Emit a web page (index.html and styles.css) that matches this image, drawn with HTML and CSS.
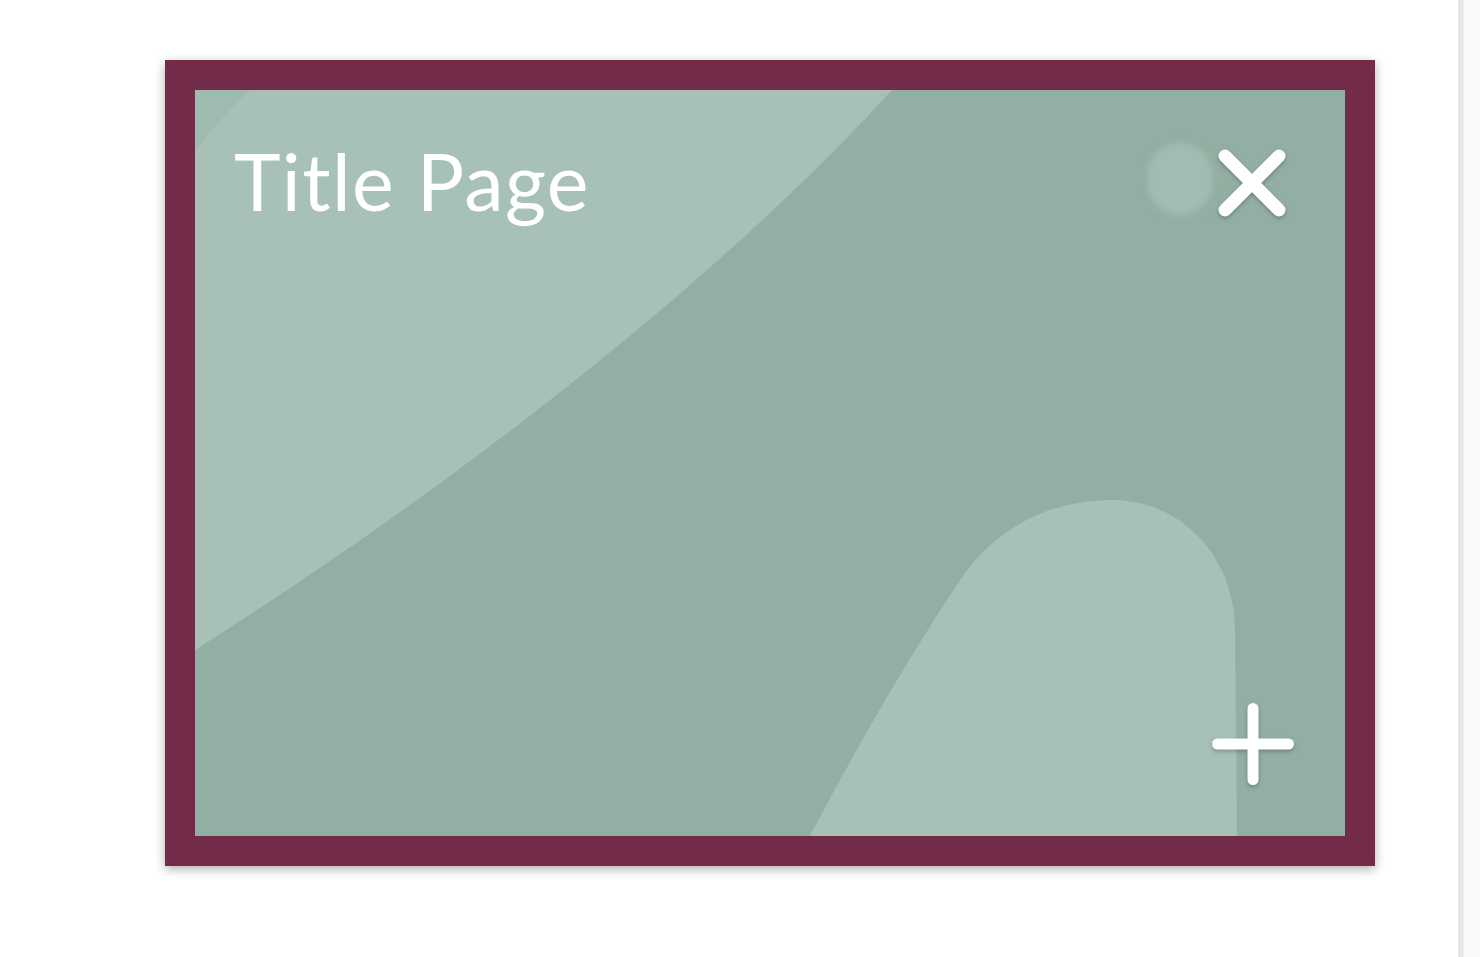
FILE: index.html
```html
<!DOCTYPE html>
<html lang="en">
<head>
    <meta charset="UTF-8">
    <meta name="viewport" content="width=device-width, initial-scale=1.0">
    <title>Title Page</title>
    <link rel="stylesheet" href="styles.css">
</head>

<body>
    <div class="layout">
        <!-- Slide list -->
        <main class="slides">
            <div class="slide-card">
                <!-- Thumbnail background shapes -->
                <svg class="slide-bg" viewBox="0 0 1150 746" preserveAspectRatio="none">
                    <rect width="1150" height="746" fill="#93afa3"/>
                    <path d="M697 0 C560 150 330 350 0 560 V0 Z" fill="#a7c1b7"/>
                    <path d="M0 0 H55 C35 20 15 40 0 62 Z" fill="#9fbaaf"/>
                    <path d="M615 746 C660 660 715 565 765 490 C810 425 870 410 920 410 C990 412 1040 470 1040 540 L1042 746 Z" fill="#a7c1b7"/>
                </svg>

                <div class="slide-head">
                    <h2 class="slide-title">Title Page</h2>
                    <span class="ghost"></span>
                    <button class="icon-btn close" aria-label="Remove slide">
                        <svg viewBox="0 0 70 70" width="70" height="70">
                            <path d="M8 8 L62 62 M62 8 L8 62" stroke="#fff" stroke-width="13" stroke-linecap="round"/>
                        </svg>
                    </button>
                </div>

                <button class="icon-btn add" aria-label="Add slide">
                    <svg viewBox="0 0 82 82" width="82" height="82">
                        <path d="M41 5.5 V76.5 M5.5 41 H76.5" stroke="#fff" stroke-width="11" stroke-linecap="round"/>
                    </svg>
                </button>
            </div>
        </main>

        <!-- Right scroll rail -->
        <aside class="rail"></aside>
    </div>
</body>
</html>
```

FILE: styles.css
```css
/* General Styles */
body {
    margin: 0;
    padding: 0;
    background-color: #fff;
    font-family: "Lato", "Open Sans", sans-serif;
}

.layout {
    display: flex;
    height: 957px;
    overflow: hidden;
}

.slides {
    flex: 1;
    padding: 60px 0 0 165px;
}

/* Slide card */
.slide-card {
    position: relative;
    box-sizing: border-box;
    width: 1210px;
    height: 806px;
    border: 30px solid #722b49;
    box-shadow: 0 3px 10px rgba(0, 0, 0, 0.32);
    display: flex;
    flex-direction: column;
    justify-content: space-between;
    padding: 51px 58px 51px 39px;
}

.slide-bg {
    position: absolute;
    inset: 0;
    width: 100%;
    height: 100%;
}

.slide-head {
    position: relative;
    display: flex;
    align-items: center;
}

.slide-title {
    flex: 1;
    margin: 0;
    color: #fff;
    font-size: 79px;
    font-weight: 400;
    line-height: 80px;
    letter-spacing: 1.4px;
}

.ghost {
    width: 64px;
    height: 72px;
    border-radius: 34px;
    background-color: #a2bcb2;
    filter: blur(3px);
    margin: 0 5px 4px 0;
}

/* Icon buttons */
.icon-btn {
    background: none;
    border: none;
    padding: 0;
    cursor: pointer;
    display: flex;
    filter: drop-shadow(0 2px 2px rgba(0, 0, 0, 0.25));
}

.close {
    margin-top: 4px;
}

.add {
    position: relative;
    align-self: flex-end;
    margin-right: -7px;
}

/* Scroll rail */
.rail {
    width: 22px;
    background: linear-gradient(to right, #e6e6e6 0, #e6e6e6 5px, #f9f9f9 6px);
}
```
